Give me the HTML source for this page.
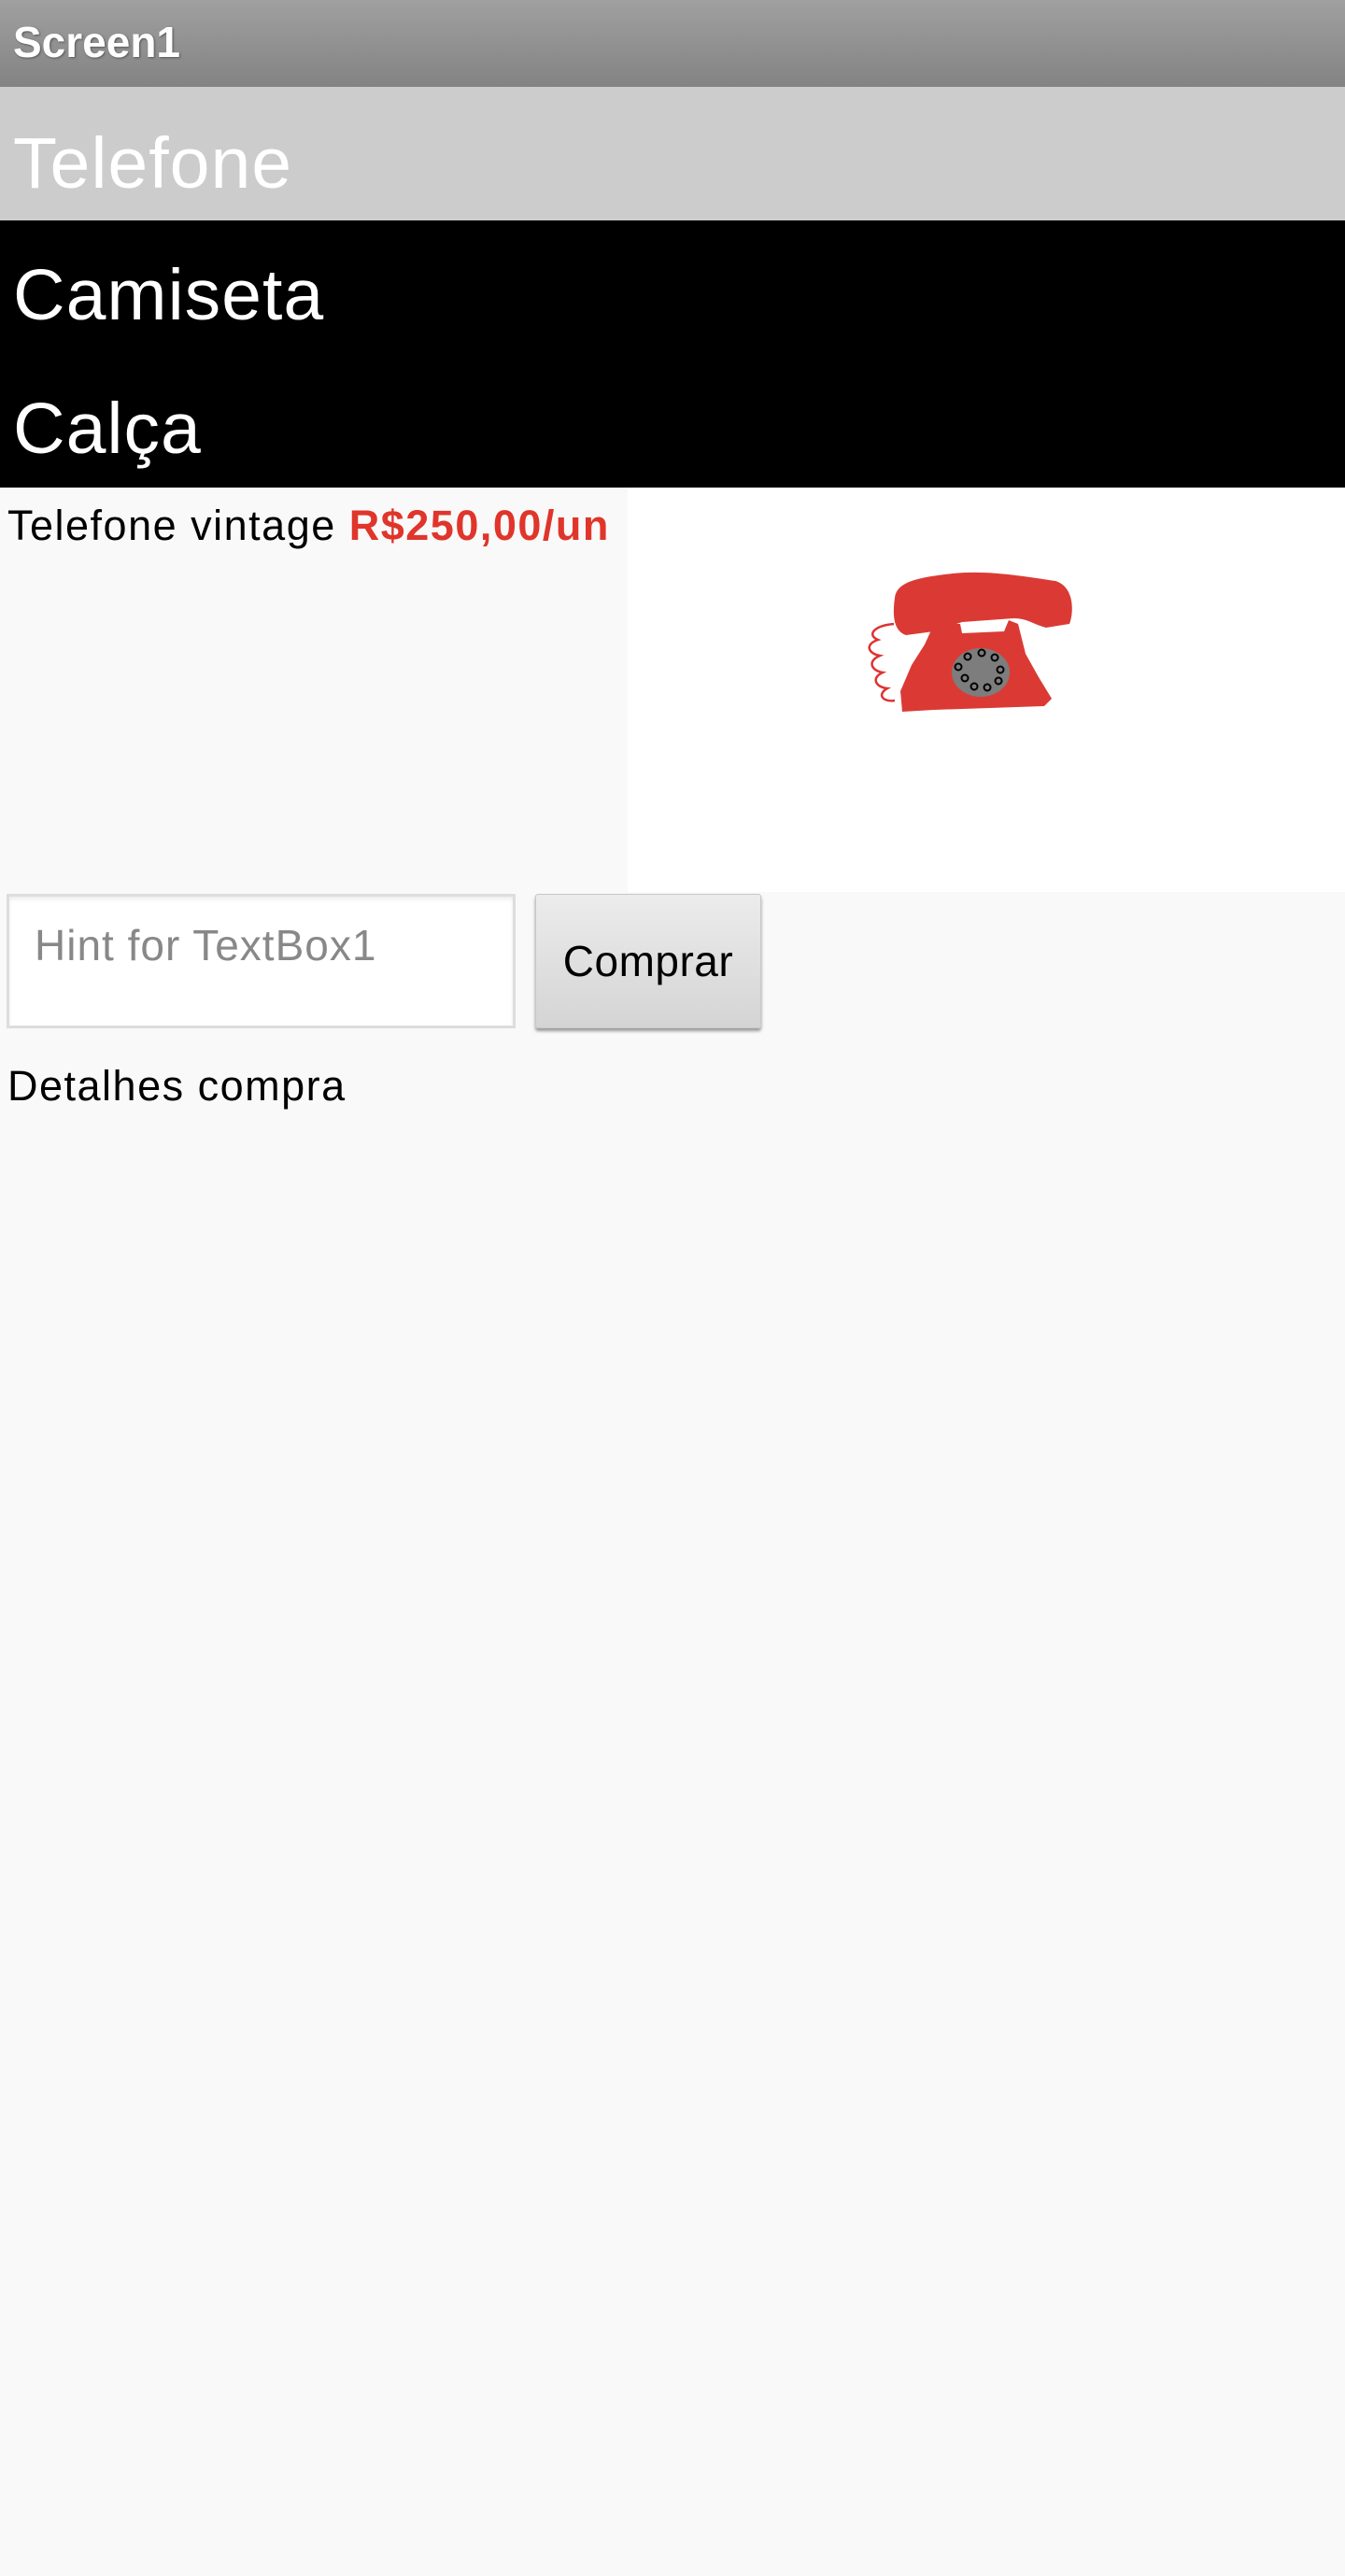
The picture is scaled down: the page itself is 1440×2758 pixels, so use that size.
<!DOCTYPE html>
<html><head><meta charset="utf-8"><style>
*{margin:0;padding:0;box-sizing:border-box}
html,body{width:1440px;height:2758px;background:#f9f9f9;font-family:"Liberation Sans",Arial,sans-serif;position:relative;overflow:hidden}
.a{position:absolute}
#title{left:0;top:0;width:1440px;height:93px;background:linear-gradient(#a0a0a0,#838383)}
#title span{position:absolute;left:14px;top:18px;font-size:46px;font-weight:bold;color:#fff;text-shadow:1px 1px 2px #555;letter-spacing:0px}
.row{left:0;width:1440px;height:143px}
.row span{position:absolute;left:14px;font-size:77px;color:#fff;line-height:1;letter-spacing:1px}
</style></head><body>
<div id="title" class="a"><span>Screen1</span></div>
<div class="a row" style="top:93px;background:#cccccc"><span style="top:44px">Telefone</span></div>
<div class="a row" style="top:236px;background:#000"><span style="top:42px">Camiseta</span></div>
<div class="a row" style="top:379px;background:#000"><span style="top:42px">Calça</span></div>
<div class="a" style="left:672px;top:522px;width:768px;height:433px;background:#fff"></div>
<div class="a" style="left:8px;top:537px;font-size:45px;color:#000;white-space:nowrap;letter-spacing:1.5px">Telefone vintage <b style="color:#e0352b">R$250,00/un</b></div>
<svg class="a" style="left:0;top:0" width="1440" height="1000">
<path d="M957 668 C935 670 928 680 940 685 C925 690 930 700 942 702 C928 708 933 718 945 720 C932 726 938 736 950 737 C938 744 946 752 958 750" fill="none" stroke="#d33" stroke-width="2.5"/>
<path d="M1000 668 L1028 668 L1030 678 L1075 676 L1080 664 L1090 668 L1098 700 L1112 725 L1126 748 L1118 756 L1060 758 L1000 760 L966 762 L964 740 L976 712 L990 690 Z" fill="#db3a34"/>
<path d="M958 640 C960 622 985 618 1020 614 C1060 610 1100 618 1130 622 C1150 628 1150 655 1145 668 L1120 672 C1105 668 1100 662 1085 662 L1030 666 L1000 676 L970 680 C955 675 956 655 958 640 Z" fill="#db3a34"/>
<ellipse cx="1050" cy="720" rx="31" ry="26" fill="#7d7d7d"/>
<g fill="none" stroke="#000" stroke-width="2">
<circle cx="1036" cy="703" r="3.5"/><circle cx="1051" cy="699" r="3.5"/><circle cx="1065" cy="704" r="3.5"/><circle cx="1071" cy="717" r="3.5"/><circle cx="1069" cy="729" r="3.5"/><circle cx="1057" cy="736" r="3.5"/><circle cx="1043" cy="735" r="3.5"/><circle cx="1033" cy="726" r="3.5"/><circle cx="1026" cy="714" r="3.5"/>
</g>
</svg>
<div class="a" style="left:7px;top:957px;width:545px;height:144px;background:#fff;border:3px solid #ddd;box-shadow:inset 0 3px 4px #eee"></div>
<div class="a" style="left:37px;top:985px;font-size:46px;color:#888;letter-spacing:1px">Hint for TextBox1</div>
<div class="a" style="left:573px;top:957px;width:242px;height:144px;background:linear-gradient(#ececec,#d4d4d4);border:1px solid #c8c8c8;box-shadow:0 3px 3px #999;border-radius:3px;font-size:46px;color:#000;text-align:center;line-height:142px;letter-spacing:0.5px">Comprar</div>
<div class="a" style="left:8px;top:1137px;font-size:45px;color:#000;letter-spacing:1.5px">Detalhes compra</div>
</body></html>
